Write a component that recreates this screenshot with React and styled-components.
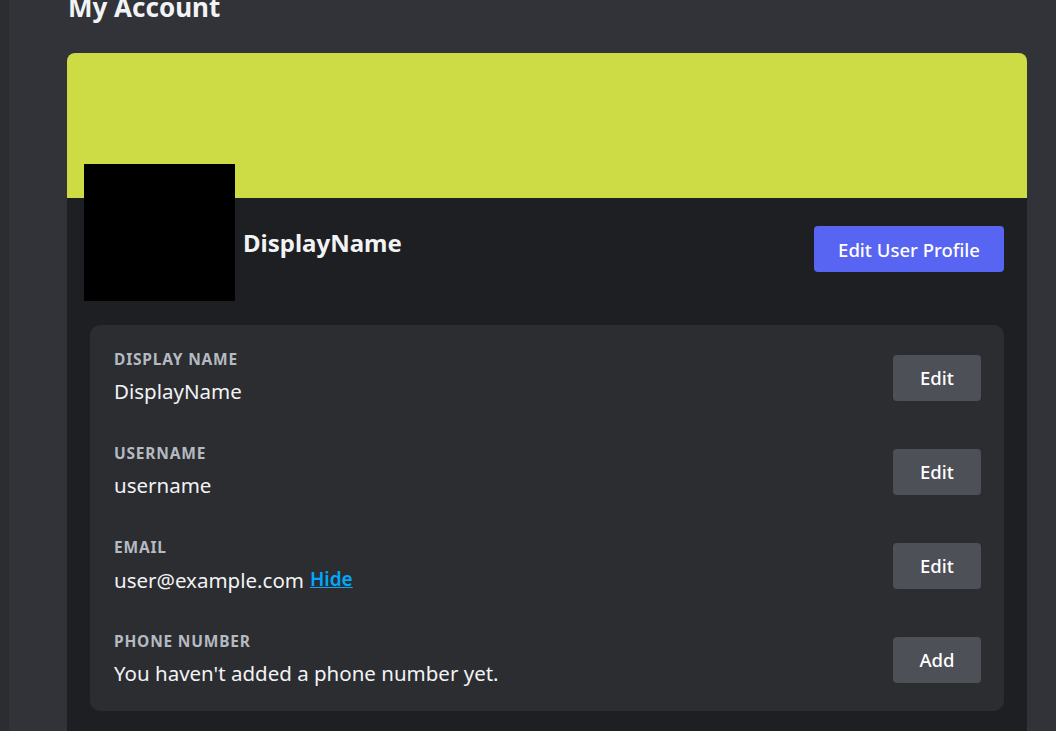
import React from "react"
import styled, { createGlobalStyle } from "styled-components"

const GlobalStyle = createGlobalStyle`
  html, body {
    margin: 0;
    padding: 0;
    background: #313338;
    overflow: hidden;
  }
  body {
    font-family: "Noto Sans", "Open Sans", sans-serif;
  }
`

const fields = [
  { label: "Display Name", value: "DisplayName", action: "Edit" },
  { label: "Username", value: "username", action: "Edit" },
  { label: "Email", value: "user@example.com", action: "Edit", link: "Hide" },
  { label: "Phone Number", value: "You haven't added a phone number yet.", action: "Add" },
]

const App = () => {
  return (
    <Page>
      <GlobalStyle />
      <SideEdge />
      <Main>
        <Title>My Account</Title>
        <Card>
          <Banner />
          <CardBody>
            <Header>
              <Avatar />
              <Name>DisplayName</Name>
              <PrimaryButton>Edit User Profile</PrimaryButton>
            </Header>
            <Panel>
              {fields.map((f) => (
                <Row key={f.label}>
                  <Info>
                    <Label>{f.label}</Label>
                    <Value>
                      {f.value}
                      {f.link && <Reveal href="#">{f.link}</Reveal>}
                    </Value>
                  </Info>
                  <SecondaryButton>{f.action}</SecondaryButton>
                </Row>
              ))}
            </Panel>
          </CardBody>
        </Card>
      </Main>
    </Page>
  )
}

export default App

const Page = styled.div`
  display: flex;
  width: 1056px;
  height: 731px;
  overflow: hidden;
  background: #313338;
`

const SideEdge = styled.div`
  width: 9px;
  flex-shrink: 0;
  background: #2b2d31;
`

const Main = styled.main`
  padding-left: 58px;
  width: 960px;
`

const Title = styled.h1`
  margin: -9px 0 30px 1px;
  font-size: 26px;
  line-height: 32px;
  font-weight: 700;
  color: #f2f3f5;
`

const Card = styled.section`
  width: 960px;
  border-radius: 8px;
  overflow: hidden;
  background: #1e1f22;
`

const Banner = styled.div`
  height: 145px;
  background: #cddc45;
`

const CardBody = styled.div`
  padding: 0 23px 40px;
`

const Header = styled.div`
  display: flex;
  align-items: flex-start;
  height: 127px;
`

const Avatar = styled.div`
  width: 151px;
  height: 137px;
  margin: -34px 0 0 -6px;
  background: #000;
  flex-shrink: 0;
`

const Name = styled.div`
  margin: 29px 0 0 8px;
  font-size: 24px;
  line-height: 32px;
  font-weight: 700;
  color: #f2f3f5;
  flex: 1;
`

const PrimaryButton = styled.button`
  margin-top: 28px;
  width: 190px;
  height: 46px;
  border: none;
  border-radius: 4px;
  background: #5865f2;
  color: #fff;
  font-family: inherit;
  font-size: 18.5px;
  font-weight: 500;
  cursor: pointer;
`

const Panel = styled.div`
  display: flex;
  flex-direction: column;
  gap: 39px;
  padding: 25px 23px 24px 24px;
  border-radius: 10px;
  background: #2b2d31;
`

const Row = styled.div`
  display: flex;
  align-items: center;
  justify-content: space-between;
  height: 55px;
`

const Info = styled.div`
  display: flex;
  flex-direction: column;
  gap: 10px;
`

const Label = styled.div`
  font-size: 15.5px;
  line-height: 18px;
  font-weight: 700;
  letter-spacing: 0.8px;
  text-transform: uppercase;
  color: #b5bac1;
`

const Value = styled.div`
  font-size: 20.5px;
  line-height: 27px;
  color: #f2f3f5;
`

const Reveal = styled.a`
  margin-left: 6px;
  font-size: 19px;
  font-weight: 600;
  color: #00a8fc;
  text-decoration: underline;
  vertical-align: 2px;
`

const SecondaryButton = styled.button`
  width: 88px;
  height: 46px;
  border: none;
  border-radius: 4px;
  background: #4e5058;
  color: #fff;
  font-family: inherit;
  font-size: 18.5px;
  font-weight: 500;
  cursor: pointer;
`
